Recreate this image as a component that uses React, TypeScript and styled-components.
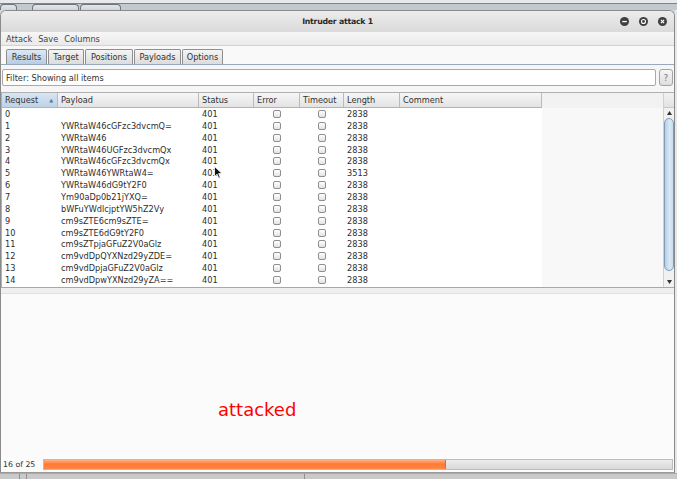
import React from "react";
import styled, { createGlobalStyle } from "styled-components";

const GlobalStyle = createGlobalStyle`
  html, body { margin: 0; padding: 0; }
  body {
    background: #d6d9dd;
    font-family: "DejaVu Sans", "Liberation Sans", sans-serif;
    color: #333;
  }
  * { box-sizing: border-box; }
`;

const Page = styled.div`
  position: relative;
  width: 677px;
  height: 479px;
  overflow: hidden;
  display: flex;
  flex-direction: column;
  background: #d6d9dd;
`;

const BackdropStrip = styled.div`
  flex: none;
  height: 10px;
  display: flex;
  align-items: flex-end;
  background: linear-gradient(#e7e9ec 0 3px, #7d838b 3px 4px, #c4c9d0 4px);
`;

const BackTab = styled.div<{ $w: number; $ml: number }>`
  width: ${(p) => p.$w}px;
  margin-left: ${(p) => p.$ml}px;
  height: 6px;
  border: 1px solid #6f757d;
  border-bottom: none;
  border-radius: 4px 4px 0 0;
  background: linear-gradient(#e2e5e9, #d2d6db);
`;

const WindowRow = styled.div`
  flex: none;
  display: flex;
  height: 463px;
`;

const Window = styled.div`
  width: 675px;
  height: 463px;
  display: flex;
  flex-direction: column;
  border: 1px solid #8a8a8a;
  border-bottom-color: #9a9a9a;
  border-radius: 6px 6px 0 0;
  background: #f8f8f8;
  overflow: hidden;
`;

const RightEdge = styled.div`
  flex: 1;
  background: #e6e7e9;
`;

const TitleBar = styled.div`
  flex: none;
  height: 21px;
  display: grid;
  grid-template-columns: 1fr auto 1fr;
  align-items: center;
  background: linear-gradient(#ececec, #dadada);
`;

const Title = styled.div`
  grid-column: 2;
  font-size: 7.8px;
  font-weight: bold;
  letter-spacing: -0.25px;
  color: #2a2a2a;
`;

const WindowButtons = styled.div`
  grid-column: 3;
  justify-self: end;
  display: flex;
  gap: 10px;
  padding-right: 7px;
`;

const WinButton = styled.div`
  width: 9px;
  height: 9px;
  border-radius: 50%;
  background: #404040;
  display: flex;
  align-items: center;
  justify-content: center;
`;

const MenuBar = styled.div`
  flex: none;
  height: 14px;
  display: flex;
  align-items: center;
  padding-left: 2px;
  background: linear-gradient(#f6f6f6, #eaeaea);
  border-bottom: 1px solid #d2d2d2;
`;

const MenuItem = styled.span`
  font-size: 8.2px;
  color: #444;
  padding: 0 3px;
`;

const TabStrip = styled.div`
  flex: none;
  height: 19px;
  display: flex;
  align-items: flex-end;
  gap: 1px;
  padding-left: 5px;
  background: #f9f9f9;
  border-bottom: 1px solid #98a9bb;
`;

const Tab = styled.div<{ $active?: boolean; $w: number }>`
  width: ${(p) => p.$w}px;
  height: 15px;
  display: flex;
  align-items: center;
  justify-content: center;
  font-size: 8.2px;
  color: #333;
  border: 1px solid #8e8e8e;
  border-bottom: none;
  border-radius: 2px 2px 0 0;
  background: ${(p) =>
    p.$active
      ? "linear-gradient(#dce8f4, #b9cde2)"
      : "linear-gradient(#f4f4f4, #dcdcdc)"};
`;

const Body = styled.div`
  flex: 1;
  display: flex;
  flex-direction: column;
  background: #f6f6f6;
`;

const FilterRow = styled.div`
  flex: none;
  margin-top: 4px;
  height: 17px;
  display: flex;
  gap: 3px;
  padding: 0 1px;
`;

const FilterField = styled.div`
  flex: 1;
  display: flex;
  align-items: center;
  padding-left: 3px;
  font-size: 8.2px;
  color: #333;
  background: #fff;
  border: 1px solid #a9a9a9;
  border-radius: 2px;
`;

const HelpButton = styled.div`
  width: 14px;
  display: flex;
  align-items: center;
  justify-content: center;
  font-size: 9px;
  color: #7a7a7a;
  border: 1px solid #a3a3a3;
  border-radius: 3px;
  background: linear-gradient(#f6f6f6, #dedede);
`;

const TableBox = styled.div`
  flex: none;
  margin-top: 6px;
  height: 196px;
  display: flex;
  border-top: 1px solid #b0b0b0;
  border-bottom: 1px solid #a8a8a8;
  border-left: 1px solid #b0b0b0;
  background: #f7f7f7;
`;

const Columns = styled.div`
  width: 540px;
  display: flex;
  flex-direction: column;
  background: #fff;
`;

const EmptyZone = styled.div`
  flex: 1;
  display: flex;
  flex-direction: column;
  background: #f8f8f8;
`;

const EmptyHeader = styled.div`
  height: 15px;
  background: #f2f2f2;
`;

const GridRow = styled.div<{ $header?: boolean }>`
  display: grid;
  grid-template-columns: 56px 141px 55px 46px 44px 56px 142px;
  height: ${(p) => (p.$header ? "15px" : "11.86px")};
  flex: none;
`;

const HeaderCell = styled.div<{ $active?: boolean }>`
  display: flex;
  align-items: center;
  justify-content: space-between;
  padding: 0 4px 0 3px;
  font-size: 8.2px;
  color: #333;
  border-right: 1px solid #bababa;
  border-bottom: 1px solid #b3b3b3;
  background: ${(p) =>
    p.$active
      ? "linear-gradient(#d8e5f2, #bfd2e5)"
      : "linear-gradient(#f6f6f6, #e3e3e3)"};
`;

const SortArrow = styled.span`
  font-size: 5px;
  color: #5b7896;
`;

const Cell = styled.div`
  display: flex;
  align-items: center;
  padding-left: 3px;
  font-size: 8.2px;
  color: #2e2e2e;
  white-space: nowrap;
`;

const CheckCell = styled.div`
  display: flex;
  align-items: center;
  justify-content: center;
`;

const CheckBox = styled.div`
  width: 8px;
  height: 8px;
  border: 1px solid #8f8f8f;
  border-radius: 2px;
  background: linear-gradient(#ffffff, #e2e2e2);
`;

const ScrollBar = styled.div`
  width: 11px;
  flex: none;
  display: flex;
  flex-direction: column;
  background: #f1f1f1;
  border-left: 1px solid #d0d0d0;
`;

const ScrollCorner = styled.div`
  height: 15px;
  flex: none;
  background: linear-gradient(#f2f2f2, #e2e2e2);
  border-bottom: 1px solid #c8c8c8;
`;

const ScrollArrow = styled.div`
  height: 10px;
  flex: none;
  display: flex;
  align-items: center;
  justify-content: center;
`;

const Thumb = styled.div`
  flex: 1;
  margin: 0 0 6px 0;
  border: 1px solid #7e9cb9;
  border-radius: 5px;
  background: linear-gradient(90deg, #b7cfe5, #dbe9f6 60%, #c8dcee);
`;

const Splitter = styled.div`
  flex: none;
  height: 6px;
  background: #efefef;
  border-bottom: 1px solid #e0e0e0;
`;

const LowerPanel = styled.div`
  flex: 1;
  padding: 105px 0 0 217px;
  background: #fbfbfb;
`;

const AttackedText = styled.div`
  font-size: 18px;
  color: #ff0000;
`;

const StatusBar = styled.div`
  flex: none;
  height: 15px;
  display: flex;
  align-items: center;
  padding: 0 1px 0 2px;
  background: #fbfbfb;
`;

const StatusLabel = styled.span`
  width: 40px;
  flex: none;
  font-size: 7.8px;
  color: #333;
`;

const ProgressTrack = styled.div`
  flex: 1;
  height: 11px;
  display: flex;
  border: 1px solid #bcbcbc;
  background: linear-gradient(#ececec, #d9d9d9);
`;

const ProgressFill = styled.div`
  height: 100%;
  background: linear-gradient(#ffb084, #ff7a34 45%, #ff8745);
  border-right: 1px solid #e06a2a;
`;

const BottomStrip = styled.div`
  flex: 1;
  display: flex;
  background: #c9c9c9;
  border-top: 1px solid #a9a9a9;
`;

const StripSeg = styled.div<{ $w: number }>`
  width: ${(p) => p.$w}px;
  flex: none;
  border-right: 1px solid #8f8f8f;
`;

const Cursor = styled.svg`
  position: absolute;
  left: 214px;
  top: 166px;
`;

const rows: [string, string, string, string][] = [
  ["0", "", "401", "2838"],
  ["1", "YWRtaW46cGFzc3dvcmQ=", "401", "2838"],
  ["2", "YWRtaW46", "401", "2838"],
  ["3", "YWRtaW46UGFzc3dvcmQx", "401", "2838"],
  ["4", "YWRtaW46cGFzc3dvcmQx", "401", "2838"],
  ["5", "YWRtaW46YWRtaW4=", "403", "3513"],
  ["6", "YWRtaW46dG9tY2F0", "401", "2838"],
  ["7", "Ym90aDp0b21jYXQ=", "401", "2838"],
  ["8", "bWFuYWdlcjptYW5hZ2Vy", "401", "2838"],
  ["9", "cm9sZTE6cm9sZTE=", "401", "2838"],
  ["10", "cm9sZTE6dG9tY2F0", "401", "2838"],
  ["11", "cm9sZTpjaGFuZ2V0aGlz", "401", "2838"],
  ["12", "cm9vdDpQYXNzd29yZDE=", "401", "2838"],
  ["13", "cm9vdDpjaGFuZ2V0aGlz", "401", "2838"],
  ["14", "cm9vdDpwYXNzd29yZA==", "401", "2838"],
];

const tabs: [string, number][] = [
  ["Results", 41],
  ["Target", 36],
  ["Positions", 48],
  ["Payloads", 47],
  ["Options", 41],
];

const done = 16;
const total = 25;

export default function App() {
  return (
    <>
      <GlobalStyle />
      <Page>
        <BackdropStrip>
          <BackTab $w={17} $ml={0} />
          <BackTab $w={47} $ml={15} />
          <BackTab $w={41} $ml={1} />
        </BackdropStrip>
        <WindowRow>
          <Window>
            <TitleBar>
              <Title>Intruder attack 1</Title>
              <WindowButtons>
                <WinButton>
                  <svg width="9" height="9" viewBox="0 0 9 9">
                    <rect x="2.2" y="3.9" width="4.6" height="1.3" fill="#fff" />
                  </svg>
                </WinButton>
                <WinButton>
                  <svg width="9" height="9" viewBox="0 0 9 9">
                    <circle cx="4.5" cy="4.5" r="2" fill="none" stroke="#fff" strokeWidth="1.1" />
                  </svg>
                </WinButton>
                <WinButton>
                  <svg width="9" height="9" viewBox="0 0 9 9">
                    <path d="M2.9 2.9 L6.1 6.1 M6.1 2.9 L2.9 6.1" stroke="#fff" strokeWidth="1.2" />
                  </svg>
                </WinButton>
              </WindowButtons>
            </TitleBar>
            <MenuBar>
              <MenuItem>Attack</MenuItem>
              <MenuItem>Save</MenuItem>
              <MenuItem>Columns</MenuItem>
            </MenuBar>
            <TabStrip>
              {tabs.map(([label, w], i) => (
                <Tab key={label} $w={w} $active={i === 0}>
                  {label}
                </Tab>
              ))}
            </TabStrip>
            <Body>
              <FilterRow>
                <FilterField>Filter: Showing all items</FilterField>
                <HelpButton>?</HelpButton>
              </FilterRow>
              <TableBox>
                <Columns>
                  <GridRow $header>
                    <HeaderCell $active>
                      Request<SortArrow>▲</SortArrow>
                    </HeaderCell>
                    <HeaderCell>Payload</HeaderCell>
                    <HeaderCell>Status</HeaderCell>
                    <HeaderCell>Error</HeaderCell>
                    <HeaderCell>Timeout</HeaderCell>
                    <HeaderCell>Length</HeaderCell>
                    <HeaderCell>Comment</HeaderCell>
                  </GridRow>
                  {rows.map(([req, payload, status, length]) => (
                    <GridRow key={req}>
                      <Cell>{req}</Cell>
                      <Cell>{payload}</Cell>
                      <Cell>{status}</Cell>
                      <CheckCell>
                        <CheckBox />
                      </CheckCell>
                      <CheckCell>
                        <CheckBox />
                      </CheckCell>
                      <Cell>{length}</Cell>
                      <Cell />
                    </GridRow>
                  ))}
                </Columns>
                <EmptyZone>
                  <EmptyHeader />
                </EmptyZone>
                <ScrollBar>
                  <ScrollCorner />
                  <ScrollArrow>
                    <svg width="5" height="4" viewBox="0 0 5 4">
                      <path d="M2.5 0 L5 4 L0 4 Z" fill="#333" />
                    </svg>
                  </ScrollArrow>
                  <Thumb />
                  <ScrollArrow>
                    <svg width="5" height="4" viewBox="0 0 5 4">
                      <path d="M0 0 L5 0 L2.5 4 Z" fill="#333" />
                    </svg>
                  </ScrollArrow>
                </ScrollBar>
              </TableBox>
              <Splitter />
              <LowerPanel>
                <AttackedText>attacked</AttackedText>
              </LowerPanel>
              <StatusBar>
                <StatusLabel>
                  {done} of {total}
                </StatusLabel>
                <ProgressTrack>
                  <ProgressFill style={{ width: `${(done / total) * 100}%` }} />
                </ProgressTrack>
              </StatusBar>
            </Body>
          </Window>
          <RightEdge />
        </WindowRow>
        <BottomStrip>
          <StripSeg $w={20} />
          <StripSeg $w={7} />
          <StripSeg $w={278} />
        </BottomStrip>
        <Cursor width="9" height="13" viewBox="0 0 9 13">
          <path d="M0.5 0.5 L0.5 10.5 L3 8.2 L4.8 12.2 L6.3 11.5 L4.6 7.6 L8 7.6 Z" fill="#111" stroke="#fff" strokeWidth="0.8" />
        </Cursor>
      </Page>
    </>
  );
}
